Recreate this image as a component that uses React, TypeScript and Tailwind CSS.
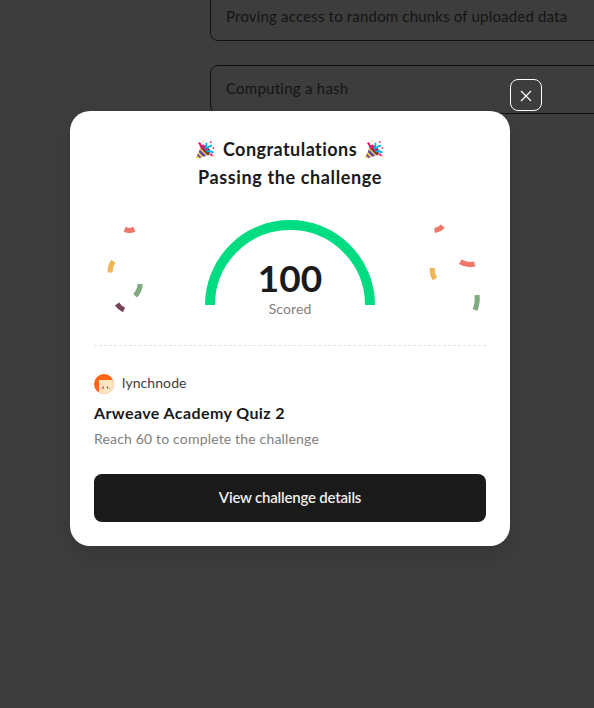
import React from "react";

function PartyPopper() {
  return (
    <svg className="h-[19px] w-[19px] shrink-0" viewBox="0 0 36 36" fill="none">
      <path d="M9 9 19 11 27 19 25 29 15 28 8 19Z" fill="#713b32" />
      <path d="M8 15 22 29 2 35 0 33Z" fill="#ffcc4d" />
      <path d="m7 18 12 12-5 1.6L5.5 23ZM3.5 26l7 7-4 1.2L2 29Z" fill="#5b4bb0" />
      <path d="M15 17c-5-3-8-6-7-11M18 21l4-5" stroke="#ec1b78" strokeWidth="3.5" />
      <path d="M17 17c4-3 2-7 3-12M20 22c4-3 8-1 13 2M22 16c0-5 4-3 8-6" stroke="#00b4ec" strokeWidth="3.5" />
      <path d="M5 5 9 9M13 9l3 5M27 26l4 4" stroke="#ec1b78" strokeWidth="3.5" />
      <circle cx="14" cy="3" r="1.5" fill="#ffc83d" />
      <circle cx="33" cy="15" r="1.6" fill="#ec1b78" />
      <circle cx="28" cy="4" r="1.8" fill="#ec1b78" />
      <circle cx="33" cy="31" r="1.4" fill="#ffc83d" />
    </svg>
  );
}

function ConfettiLeft() {
  return (
    <svg className="h-[105px] w-[60px]" viewBox="0 0 60 105" fill="none">
      <path d="M30.6 9.4Q35.5 11.4 40.4 9.4" stroke="#f1766a" strokeWidth="5" />
      <path d="M19.3 41.3Q16 46 16 52.4" stroke="#f0b557" strokeWidth="5" />
      <path d="M46.2 64Q45.8 71 41 75.8" stroke="#80ab80" strokeWidth="5.1" />
      <path d="M23 84Q26 88 30 90" stroke="#784259" strokeWidth="5.2" />
    </svg>
  );
}

function ConfettiRight() {
  return (
    <svg className="h-[105px] w-[60px]" viewBox="0 0 60 105" fill="none">
      <path d="M16.8 6.2Q13.5 10 8.5 10.4" stroke="#f1766a" strokeWidth="5" />
      <path d="M34.3 41.7Q41 45.8 48.7 44" stroke="#f1766a" strokeWidth="5.2" />
      <path d="M6.3 48Q5.7 54 8.8 59" stroke="#f0b557" strokeWidth="5.1" />
      <path d="M51 75Q52 83 49 90" stroke="#80ab80" strokeWidth="5.1" />
    </svg>
  );
}

function ScoreGauge() {
  return (
    <div className="relative h-[105px] w-[170px]">
      <svg className="block h-[85px] w-[170px]" viewBox="0 0 170 85" fill="none">
        <path d="M5 85a80 80 0 0 1 160 0" stroke="#00dc82" strokeWidth="10" />
      </svg>
      <div className="absolute inset-x-0 top-[37px] flex flex-col items-center">
        <span className="text-[37px] leading-[42px] font-bold text-[#1a1a1a]">100</span>
        <span className="text-[14px] leading-5 tracking-[0.1px] text-[#808080]">Scored</span>
      </div>
    </div>
  );
}

function Avatar() {
  return (
    <svg className="h-5 w-5" viewBox="0 0 20 20">
      <clipPath id="avatar-clip">
        <circle cx="10" cy="10" r="10" />
      </clipPath>
      <g clipPath="url(#avatar-clip)">
        <rect width="20" height="20" fill="#ff6518" />
        <rect x="5" y="6" width="15" height="14" fill="#fbe6bd" />
        <path d="M9 12.5v1.5h1M13.3 12.5v1.5h1" stroke="#48363a" strokeWidth=".9" fill="none" />
        <path d="M7.5 14.7h1.6M15 14.7h1.6" stroke="#f3a0a4" />
      </g>
    </svg>
  );
}

export default function App() {
  return (
    <div className="relative h-[708px] w-[594px] overflow-hidden bg-[#3d3d3d] font-['Lato',sans-serif]">
      <div className="ml-[210px] flex w-[440px] flex-col gap-6 text-[15px] text-[#141414]">
        <div className="-mt-2 flex h-[49px] items-center rounded-lg border border-[#111111] px-[15px]">
          <span className="tracking-[0.18px]">Proving access to random chunks of uploaded data</span>
        </div>
        <div className="flex h-[49px] items-center rounded-lg border border-[#111111] px-[15px] pb-0.5">
          <span className="tracking-[0.25px]">Computing a hash</span>
        </div>
      </div>

      <button
        aria-label="Close"
        className="absolute top-[79px] left-[510px] flex h-8 w-8 items-center justify-center rounded-lg border border-white bg-[#3d3d3d]"
      >
        <svg className="mt-px h-3 w-3" viewBox="0 0 12 12">
          <path d="m1 1 10 10M11 1 1 11" stroke="white" strokeWidth="1.2" />
        </svg>
      </button>

      <div className="absolute top-[111px] left-[70px] flex h-[435px] w-[440px] flex-col rounded-[20px] bg-white p-6 shadow-[0_10px_24px_rgba(0,0,0,0.12)]">
        <h2 className="flex flex-col items-center text-[18px] leading-7 font-bold text-[#1a1a1a]">
          <span className="flex items-center gap-2">
            <PartyPopper />
            <span className="tracking-[0.45px]">Congratulations</span>
            <PartyPopper />
          </span>
          <span className="tracking-[0.62px]">Passing the challenge</span>
        </h2>

        <div className="mt-[29px] flex justify-between">
          <ConfettiLeft />
          <ScoreGauge />
          <ConfettiRight />
        </div>

        <div className="mt-5 border-t border-dashed border-[#e4e4e4]" />

        <div className="mt-7 flex h-5 items-center gap-2">
          <Avatar />
          <span className="-mt-0.5 text-[14px] leading-5 tracking-[0.08px] text-[#404040]">lynchnode</span>
        </div>
        <h3 className="mt-[7px] text-[16px] leading-6 font-bold tracking-[0.4px] text-[#1a1a1a]">Arweave Academy Quiz 2</h3>
        <p className="mt-1 text-[14px] leading-5 tracking-[0.17px] text-[#808080]">Reach 60 to complete the challenge</p>

        <button className="mt-auto flex h-12 shrink-0 items-center justify-center rounded-lg bg-[#1a1a1a] pb-0.5 text-[15px] font-semibold tracking-[-0.2px] text-[#eeeeee]">
          View challenge details
        </button>
      </div>
    </div>
  );
}
